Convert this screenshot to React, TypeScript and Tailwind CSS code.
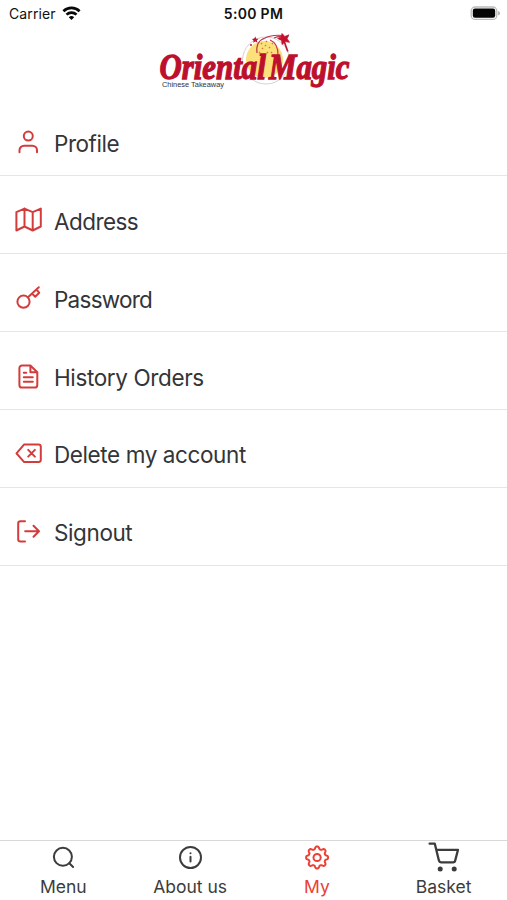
import type { ReactNode } from "react";

function Logo() {
  return (
    <svg className="h-[66px] w-[210px] overflow-visible" viewBox="0 0 210 66" fill="none">
      <circle cx="116" cy="32.5" r="23.5" stroke="#c9c6c4" strokeWidth="0.8" />
      <circle cx="114.5" cy="31.5" r="18.5" fill="#fce07a" />
      <path d="M107 25c-1-8 2-13 8-15 7-3.5 13-3 18-2.500" stroke="#b9374a" strokeWidth="1.2" />
      <path d="M120 12c5 2 8 7 8 15M124 10c4-2 7-2 10-1" stroke="#c4324a" strokeWidth="1.2" />
      <path d="M111 15l1 1M116 13l1 1M112 20l1 1M119 19l1 1M117 24l1 1M109 24l1 1M122 15l1 1M121 24l1 1M115 17l1 1" stroke="#d77b35" strokeWidth="1.5" />
      <path d="m134 13 3.800 10.500" stroke="#be1638" strokeWidth="1.700" />
      <path d="m132 5.500 2.800 3 4-1.600-1.700 3.800 2.400 3.600-4.300-.7-3 3-.6-4.200-4-2 3.900-1.500z" fill="#c3102f" stroke="#c3102f" strokeWidth="0.8" />
      <path d="m105.400 8.500.7 2.200 2.300.1-1.600 1.600.7 2.300-2.200-1.100-2.100 1.200.4-2.300-1.700-1.600 2.300-.3z" fill="#c3102f" />
      <circle cx="101" cy="17" r="1" fill="#c3102f" />
      <text x="9.5" y="51" fontSize="35" textLength="190" lengthAdjust="spacingAndGlyphs" wordSpacing="-5" fill="#bd102c" stroke="#bd102c" strokeWidth="1.3" fontFamily="'Liberation Serif', serif" fontWeight="700" fontStyle="italic">Oriental Magic</text>
      <text x="12" y="59" fontSize="7" fill="#333" fontFamily="'Liberation Sans', sans-serif" textLength="62" lengthAdjust="spacingAndGlyphs">Chinese Takeaway</text>
    </svg>
  );
}

/* Eight-lobed gear outline, rounded at the teeth and the valleys. */
const gearOutline = Array.from({ length: 128 }, (_, i) => {
  const angle = (i / 128) * Math.PI * 2;
  const wave = Math.cos(8 * angle);
  const radius = 9.75 + 1.4 * Math.tanh(wave * 1.5);
  return `${(16.1 + radius * Math.sin(angle)).toFixed(2)},${(16.5 - radius * Math.cos(angle)).toFixed(2)}`;
}).join(" ");

const rows: { label: string; tracking: string; icon: ReactNode }[] = [
  { label: "Profile", tracking: "tracking-[-0.45px]", icon: <><circle cx="14.3" cy="8.1" r="4.5" /><path d="M5.5 24.3v-2a4.6 4.6 0 0 1 4.6-4.6h8.3a4.6 4.6 0 0 1 4.6 4.6v2" /></> },
  { label: "Address", tracking: "tracking-[-0.55px]", icon: <path d="M2.4 6.2v18.3l8.1-4 8.2 4 8.1-4V2.6l-8.1 3.6-8.2-3.6zM10.5 2.6v17.9M18.7 6.2v18.3" /> },
  { label: "Password", tracking: "tracking-[-0.75px]", icon: <><circle cx="9.5" cy="17.7" r="6.1" /><path d="M14 13.2 24.8 3.2M18 9.5l3.2 3.2 4-4-2.9-3.2" /></> },
  { label: "History Orders", tracking: "tracking-[-0.37px]", icon: <path d="M16.4 3.5H8a2.6 2.6 0 0 0-2.6 2.6v16.8A2.6 2.6 0 0 0 8 25.5h12.7a2.6 2.6 0 0 0 2.6-2.6V10.3zM16.4 3.5v6.8h6.900M9.8 10.8h2.4M9.8 15.2h9M9.8 19.7h9" /> },
  { label: "Delete my account", tracking: "tracking-[-0.4px]", icon: <path d="M24.5 5.4H10.2L2.5 14.3l7.7 8.8h14.3a2.3 2.3 0 0 0 2.3-2.3V7.7a2.3 2.3 0 0 0-2.3-2.3zM20.9 10.9l-6.7 6.7M14.2 10.9l6.7 6.7" /> },
  { label: "Signout", tracking: "tracking-[-0.4px]", icon: <path d="M11 4.2H6.5a2.3 2.3 0 0 0-2.3 2.3v15.7a2.3 2.3 0 0 0 2.3 2.3H11M11.2 14.3H25M19.5 8.8l5.5 5.5-5.5 5.5" /> },
];

const tabs: { label: string; active?: boolean; icon: ReactNode }[] = [
  { label: "Menu", icon: <><circle cx="15.9" cy="15.8" r="9" /><path d="m22.3 22.2 3.8 3.8" /></> },
  { label: "About us", icon: <><circle cx="16.5" cy="16.5" r="10.5" /><path d="M16.5 20.6v-4.8M16.5 12.2v.1" /></> },
  { label: "My", active: true, icon: <><polygon points={gearOutline} /><circle cx="16.1" cy="16.5" r="3.6" /></> },
  { label: "Basket", icon: <><path d="M1.6 2.7h5.2l4.1 16.9a2.2 2.2 0 0 0 2.1 1.7h12a2.2 2.2 0 0 0 2.2-1.8L30 8.8H8.4" strokeWidth="2.3" /><circle cx="12.2" cy="28.1" r="2.5" fill="currentColor" stroke="none" /><circle cx="26.2" cy="28.1" r="2.5" fill="currentColor" stroke="none" /></> },
];

export default function App() {
  return (
    <div className="flex h-[900px] w-[507px] flex-col overflow-hidden bg-white font-['Inter','Liberation_Sans',sans-serif]">
      <header className="grid h-7 shrink-0 grid-cols-3 items-center text-[14px] leading-7 text-[#111]">
        <div className="flex items-center gap-1.5 pl-[9px]">
          <span className="tracking-[0.1px]">Carrier</span>
          <svg className="h-[15px] w-[19px] -translate-y-px" viewBox="0 0 19 15" fill="none" stroke="#080808" strokeWidth="2.7">
            <path d="M1.4 5.2a11.6 11.6 0 0 1 16.2 0M4.5 8.6a7.2 7.2 0 0 1 10 0" />
            <path d="m6.8 11.2 2.7 2.9 2.7-2.9a4 4 0 0 0-5.4 0z" fill="#080808" stroke="none" />
          </svg>
        </div>
        <span className="text-center font-semibold tracking-[0.3px]">5:00 PM</span>
        <svg className="mr-1.5 mb-[3px] h-4 w-8 justify-self-end" viewBox="0 0 32 16" fill="none">
          <rect x="2.2" y="2" width="25.6" height="12.4" rx="4" fill="#fff" stroke="#bbb" strokeWidth="1.3" />
          <rect x="3.8" y="3.6" width="22.4" height="9.2" rx="2.2" fill="#050505" />
          <path d="M29.2 6v4.4q1.8-.7 1.8-2.2T29.2 6z" fill="#aaa" />
        </svg>
      </header>

      <div className="flex h-[70.4px] shrink-0 justify-center pl-[3px]">
        <Logo />
      </div>

      <main className="flex-1">
        {rows.map((row) => (
          <div key={row.label} className="flex h-[77.95px] items-start border-b border-[#e5e5e5] pt-[29.3px] pl-3.5">
            <svg className="size-7 shrink-0" viewBox="0 0 28 28" fill="none" stroke="#d33c3c" strokeWidth="2" strokeLinecap="round" strokeLinejoin="round">
              {row.icon}
            </svg>
            <span className={`ml-3 pt-px text-[22.5px] leading-[30px] text-[#333537] ${row.tracking}`}>{row.label}</span>
          </div>
        ))}
      </main>

      <nav className="grid h-[60px] shrink-0 grid-cols-4 border-t border-[#d9d9d9]">
        {tabs.map((tab) => (
          <div key={tab.label} className={`flex flex-col items-center ${tab.active ? "text-[#eb4034]" : "text-[#3c3c3c]"}`}>
            <svg className="h-8 w-8 shrink-0" viewBox="0 0 32 32" fill="none" stroke="currentColor" strokeWidth="2" strokeLinecap="round" strokeLinejoin="round">
              {tab.icon}
            </svg>
            <span className="mt-[2px] text-[17.5px] leading-6">{tab.label}</span>
          </div>
        ))}
      </nav>
    </div>
  );
}
